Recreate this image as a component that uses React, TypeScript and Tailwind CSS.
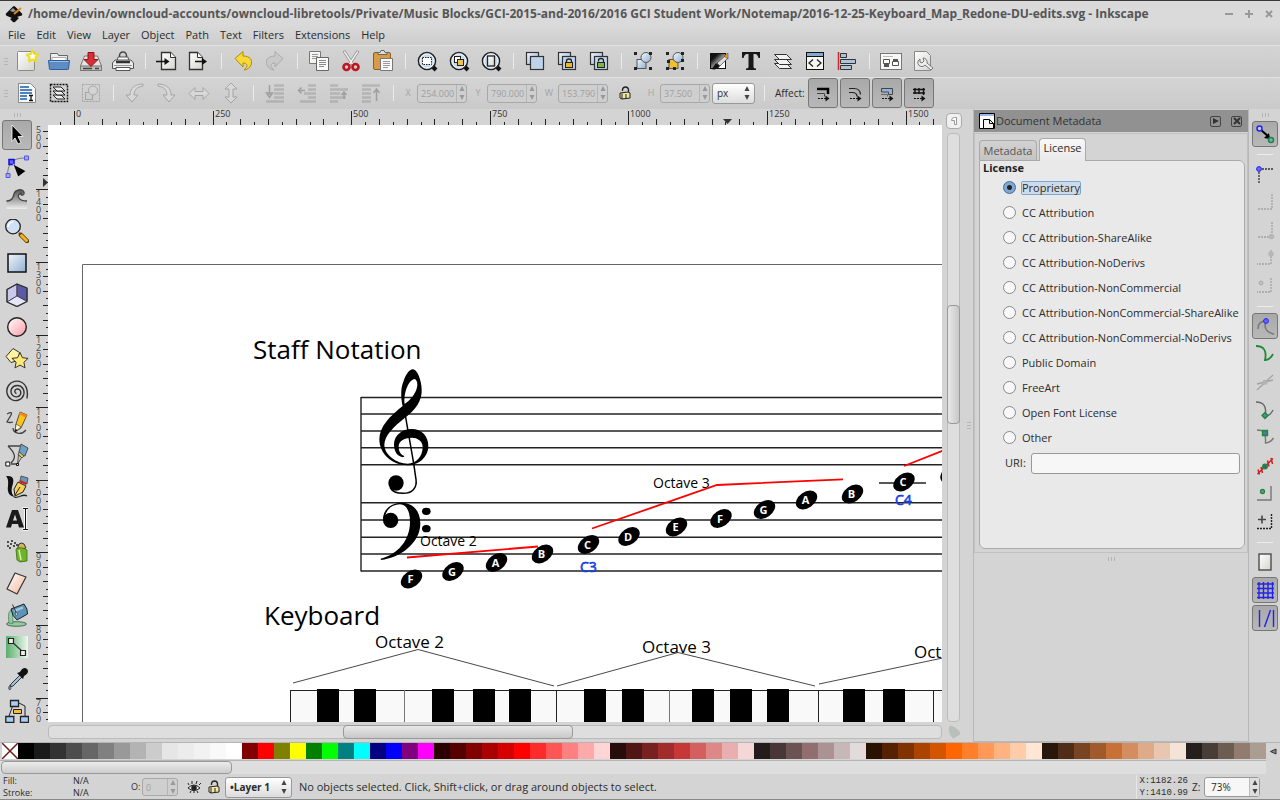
import { useState } from "react";
import type { ReactNode } from "react";

type Item = { name: string; art: ReactNode; pressed?: boolean; off?: boolean };

const star = (cx: number, cy: number, r: number, inner = 0.5, turn = -90) =>
  Array.from({ length: 10 }, (_, i) => {
    const q = i % 2 ? r * inner : r;
    const a = ((turn + i * 36) * Math.PI) / 180;
    return `${cx + q * Math.cos(a)},${cy + q * Math.sin(a)}`;
  }).join(" ");

function Ic({ children, off }: { children: ReactNode; off?: boolean }) {
  return (
    <svg viewBox="0 0 24 24" className={off ? "size-6 shrink-0 opacity-30 grayscale" : "size-6 shrink-0"} fill="none" aria-hidden="true">
      {children}
    </svg>
  );
}

function Defs() {
  return (
    <svg className="absolute size-0" aria-hidden="true">
      <defs>
        <linearGradient id="blue" x1="0" y1="0" x2="1" y2="1">
          <stop offset="0" stopColor="#f2f7fc" />
          <stop offset="1" stopColor="#8fb0d2" />
        </linearGradient>
        <linearGradient id="pink" x1="0" y1="0" x2="1" y2="1">
          <stop offset="0" stopColor="#fff" />
          <stop offset="1" stopColor="#ff9aa2" />
        </linearGradient>
        <linearGradient id="green" x1="0" y1="0" x2="1" y2="0">
          <stop offset="0" stopColor="#5aae6c" />
          <stop offset="1" stopColor="#eef8ef" />
        </linearGradient>
        <linearGradient id="paper" x1="0" y1="0" x2="1" y2="1">
          <stop offset="0" stopColor="#fff" />
          <stop offset="1" stopColor="#d4d4cf" />
        </linearGradient>
        <linearGradient id="shade" x1="0" y1="0" x2="0" y2="1">
          <stop offset="0" stopColor="#555" />
          <stop offset="1" stopColor="#eee" />
        </linearGradient>
        <linearGradient id="peach" x1="0" y1="0" x2="1" y2="1">
          <stop offset="0" stopColor="#fff" />
          <stop offset="1" stopColor="#f4b79b" />
        </linearGradient>
        <linearGradient id="ink" x1="0" y1="0" x2="1" y2="1">
          <stop offset="0.25" stopColor="#111" />
          <stop offset="0.75" stopColor="#fff" />
        </linearGradient>
      </defs>
    </svg>
  );
}

const lens = (inner: ReactNode) => (
  <>
    <path d="M17 17l4 4" stroke="#111" strokeWidth="4" />
    <circle cx="12" cy="12" r="8.5" fill="#c9dcf0" stroke="#222" strokeWidth="1.6" />
    <circle cx="12" cy="12" r="7.2" stroke="#fff" strokeOpacity=".8" />
    {inner}
  </>
);

const twoSquares = (
  <>
    <rect x="3.5" y="3.5" width="12" height="12" fill="url(#blue)" stroke="#333" strokeWidth="1.2" />
    <rect x="7.5" y="7.5" width="13" height="13" fill="#bed3ea" stroke="#333" strokeWidth="1.2" />
  </>
);

const shapesGroup = (fill: string) => (
  <>
    <rect x="6" y="10.500" width="9" height="9" fill={fill} stroke="#555" />
    <circle cx="15" cy="8.500" r="5" fill="url(#blue)" stroke="#555" />
    <path d="M3 3h3v3H3zM18 3h3v3h-3zM3 18h3v3H3zM18 18h3v3h-3z" fill="#222" />
  </>
);

const page = (
  <path d="M6.500 3.500h9l5 5v12h-14z" fill="url(#paper)" stroke="#333" strokeWidth="1.300" />
);

const fileTools: Item[][] = [
  [
    {
      name: "New",
      art: (
        <>
          <rect x="2.500" y="2.500" width="17" height="19" rx="1" fill="url(#paper)" stroke="#8a8a86" />
          <polygon points={star(17.5, 7.5, 6)} fill="#fff" stroke="#f2dc20" strokeWidth="2" strokeLinejoin="round" />
        </>
      ),
    },
    {
      name: "Open",
      art: (
        <>
          <path d="M3.500 12V4.500h7l1 2h9V12" fill="#eee" stroke="#666" />
          <path d="M5 8.500h14v4H5z" fill="#fff" stroke="#aaa" />
          <path d="M1.500 11.500h21l-1 8.500q0 .500-1 .500H3.500q-1 0-1-.500z" fill="#5e8cc6" stroke="#2f5d96" />
          <path d="M2.500 12.500h19" stroke="#9cbde2" />
        </>
      ),
    },
    {
      name: "Save",
      art: (
        <>
          <path d="M1.500 17l4-10h13l4 10v4.500h-21z" fill="#e4e4e2" stroke="#777" />
          <path d="M1.500 17h21v4.500h-21z" fill="#bdbdbb" stroke="#777" />
          <path d="M4 19.500h9M16 19.500h4" stroke="#444" strokeWidth="1.500" />
          <path d="M9 3.500h6v7h4l-7 7-7-7h4z" fill="#d4303a" stroke="#99101a" />
        </>
      ),
    },
    {
      name: "Print",
      art: (
        <>
          <circle cx="12" cy="6.500" r="3.500" stroke="#444" strokeWidth="1.500" />
          <path d="M7 8h10l1 5H6z" fill="#fff" stroke="#555" />
          <path d="M4 11h16l2.500 3v5.500h-21V14z" fill="#ececea" stroke="#555" />
          <path d="M5 13h14" stroke="#333" strokeWidth="2.500" />
          <path d="M5 18.500h14v3H5z" fill="#fff" stroke="#555" />
          <path d="M3 16.500h18" stroke="#999" />
        </>
      ),
    },
  ],
  [
    {
      name: "Import",
      art: (
        <>
          {page}
          <path d="M15.500 3.500v5h5" fill="#fff" stroke="#333" />
          <path d="M1 12.500h10" stroke="#111" strokeWidth="1.500" />
          <path d="M9.500 9l5 3.500-5 3.500z" fill="#111" />
        </>
      ),
    },
    {
      name: "Export",
      art: (
        <>
          <path d="M2.500 3.500h8l5 5v12h-13z" fill="url(#paper)" stroke="#333" strokeWidth="1.300" />
          <path d="M10.500 3.500v5h5" fill="#fff" stroke="#333" />
          <path d="M8 12.500h9" stroke="#111" strokeWidth="1.500" />
          <path d="M15 9l5 3.500-5 3.500z" fill="#111" />
        </>
      ),
    },
  ],
  [
    {
      name: "Undo",
      art: <path d="M4 9.500l8-7v4.500c7 0 10 4 8 9-1 2.500-3 4.500-7 5 4-3 4-7-1-7v4z" fill="#f6d936" stroke="#b08c0a" strokeLinejoin="round" />,
    },
    {
      name: "Redo",
      off: true,
      art: <path d="M20 9.500l-8-7v4.500c-7 0-10 4-8 9 1 2.500 3 4.500 7 5-4-3-4-7 1-7v4z" fill="#bbb" stroke="#555" strokeLinejoin="round" />,
    },
  ],
  [
    {
      name: "Copy",
      art: (
        <>
          <path d="M2.500 2.500h11v12h-11z" fill="#f4f4f2" stroke="#777" />
          <path d="M5 5.500h6M5 7.500h6M5 9.500h5" stroke="#999" />
          <path d="M9.500 8.500h12v13h-12z" fill="#fafaf8" stroke="#666" />
          <path d="M12 11.500h7M12 13.500h7M12 15.500h7M12 17.500h5" stroke="#888" />
        </>
      ),
    },
    {
      name: "Cut",
      art: (
        <>
          <path d="M5 2l9 14M19 2l-9 14" stroke="#888" strokeWidth="3" />
          <path d="M5.300 2.500l8.500 13M18.700 2.500l-8.500 13" stroke="#f0f0f0" strokeWidth="1.500" />
          <circle cx="7.500" cy="18" r="3" stroke="#c01620" strokeWidth="2.600" />
          <circle cx="16.500" cy="18" r="3" stroke="#c01620" strokeWidth="2.600" />
        </>
      ),
    },
    {
      name: "Paste",
      art: (
        <>
          <rect x="2.500" y="3.500" width="17" height="17" rx="1.500" fill="#d99a45" stroke="#8f5f1c" />
          <path d="M7 5.500V3.500h2l1-2h3l1 2h2v2z" fill="#ddd" stroke="#666" />
          <path d="M9.500 9.500h12v12h-12z" fill="#fafaf8" stroke="#777" />
          <path d="M12 12.500h7M12 14.500h7M12 16.500h7M12 18.500h5" stroke="#999" />
        </>
      ),
    },
  ],
  [
    { name: "Zoom selection", art: lens(<rect x="7.500" y="8.500" width="9" height="7" fill="#fff" stroke="#222" strokeDasharray="1.500 1" />) },
    {
      name: "Zoom drawing",
      art: lens(
        <>
          <rect x="7.500" y="7.500" width="6" height="6" fill="#fff" stroke="#222" />
          <rect x="10.500" y="10.500" width="6" height="6" fill="#f2c24e" stroke="#222" />
        </>,
      ),
    },
    { name: "Zoom page", art: lens(<rect x="8.500" y="7" width="7" height="10" fill="url(#paper)" stroke="#222" strokeWidth="1.300" />) },
  ],
  [
    { name: "Duplicate", art: twoSquares },
    {
      name: "Clone",
      art: (
        <>
          {twoSquares}
          <path d="M11.500 14v-2q0-2 2.500-2t2.500 2v2" stroke="#222" strokeWidth="1.300" />
          <rect x="10.500" y="13.500" width="7" height="5" fill="#f0b820" stroke="#222" />
        </>
      ),
    },
    {
      name: "Unlink clone",
      art: (
        <>
          {twoSquares}
          <path d="M11.500 12.500v-1q0-2 2.500-2t2.500 2v3" stroke="#222" strokeWidth="1.300" />
          <rect x="10.500" y="13.500" width="7" height="5" fill="#7cb342" stroke="#222" />
        </>
      ),
    },
  ],
  [
    { name: "Group", art: shapesGroup("url(#blue)") },
    {
      name: "Ungroup",
      art: (
        <>
          {shapesGroup("#f0c030")}
          <path d="M4 11h3v3H4zM18 10h3v3h-3zM10 18h3v3h-3z" fill="#222" />
        </>
      ),
    },
  ],
  [
    {
      name: "Fill and stroke",
      art: (
        <>
          <rect x="3.500" y="4.500" width="15" height="15" fill="url(#ink)" stroke="#111" />
          <path d="M4 20c2-1 3-4 5-6l4 3c-2 3-5 4-9 3z" fill="#111" />
          <path d="M10 14l8-7 3 2-8 8z" fill="#ddd" stroke="#333" strokeWidth=".7" />
          <path d="M17 7l4-3v6z" fill="#e8a020" stroke="#433" strokeWidth=".5" />
        </>
      ),
    },
    {
      name: "Text and font",
      art: <path d="M3 3h18v6h-1.500Q18.500 5 16 5h-1.500v13q0 1.500 2.500 1.500V21H7v-1.500q2.500 0 2.500-1.500V5H8Q5.500 5 4.500 9H3z" fill="#181818" />,
    },
    {
      name: "Layers",
      art: (
        <g fill="#f2f2f2" stroke="#333" strokeLinejoin="round">
          <path d="M3.500 14.500h12l5 5h-12z" />
          <path d="M3.500 10.500h12l5 5h-12z" />
          <path d="M3.500 5.500h12l5 5h-12z" />
        </g>
      ),
    },
    {
      name: "XML editor",
      art: (
        <>
          <rect x="3.500" y="3.500" width="17" height="17" fill="#f6f6f2" stroke="#111" />
          <path d="M4 4h16v3H4z" fill="#86a8cc" />
          <path d="M3 7.500h18" stroke="#111" />
          <path d="M10 10.500l-4 3.500 4 3.500M14 10.500l4 3.500-4 3.500" stroke="#222" strokeWidth="1.300" />
        </>
      ),
    },
    {
      name: "Align",
      art: (
        <>
          <path d="M3.500 3v18" stroke="#d22" strokeWidth="1.500" />
          <path d="M5.500 4.500h6v4h-6zM5.500 10.500h15v4h-15zM5.500 16.500h11v4h-11z" fill="#a9c2dd" stroke="#333" />
        </>
      ),
    },
  ],
  [
    {
      name: "Preferences",
      art: (
        <>
          <rect x="1.500" y="4.500" width="21" height="16" fill="#f8f8f6" stroke="#777" />
          <path d="M4 7.500h10" stroke="#bbb" />
          <path d="M4.500 10.500h6v4h-6zM13.500 12.500h6v4h-6z" fill="#fff" stroke="#555" />
          <path d="M5 15h5v3H5zM14 10h5v3h-5z" fill="#555" />
        </>
      ),
    },
    {
      name: "Document properties",
      art: (
        <>
          <path d="M3.500 2.500h12l4 4v15h-16z" fill="url(#paper)" stroke="#888" />
          <path d="M9 10a4 4 0 1 0 5 6l6 5 2-2-6-5a4 4 0 0 0-4-5l1 3-2 2-2-1z" fill="#eee" stroke="#777" />
        </>
      ),
    },
  ],
];

const bars = (d: string, arrow: ReactNode) => (
  <>
    <path d={d} stroke="#777" strokeWidth="2.500" />
    {arrow}
  </>
);

const selectTools: Item[][] = [
  [
    {
      name: "Select all",
      art: (
        <>
          <path d="M3.500 2.500h12l5 5v14h-17z" fill="#f4f6f8" stroke="#8a8a8a" />
          <path d="M5 6h9M5 9h12M5 12h12M5 15h7M5 18h7" stroke="#4f82be" strokeWidth="2" />
          <path d="M12.500 13.500h7v7h-7z" fill="#fff" />
          <path d="M14 14.500h4M14 19.500h4M16 14.500v5" stroke="#111" strokeWidth="1.300" />
        </>
      ),
    },
    {
      name: "Select all layers",
      art: (
        <>
          <rect x="3.500" y="3.500" width="17" height="17" stroke="#111" strokeWidth="1.400" strokeDasharray="2 1" />
          <g fill="#eee" stroke="#222" strokeLinejoin="round">
            <path d="M6 14h8l4 4h-8z" />
            <path d="M6 10h8l4 4h-8z" />
            <path d="M6 6h8l4 4h-8z" />
          </g>
        </>
      ),
    },
    {
      name: "Deselect",
      off: true,
      art: (
        <>
          <rect x="3.500" y="3.500" width="17" height="17" stroke="#444" strokeDasharray="2 1" />
          <rect x="6.500" y="11.500" width="7" height="7" stroke="#444" />
          <circle cx="14" cy="9.500" r="4.500" fill="#ddd" stroke="#444" />
        </>
      ),
    },
  ],
  [
    { name: "Rotate left", off: true, art: <path d="M20 3C12 3 7 7 7 14H3l6 7 6-7h-4c0-5 3-8 9-9z" fill="#eee" stroke="#444" /> },
    { name: "Rotate right", off: true, art: <path d="M3 3c8 0 13 4 13 11h4l-6 7-6-7h4c0-5-3-8-9-9z" fill="#eee" stroke="#444" /> },
    { name: "Flip horizontal", off: true, art: <path d="M2 12.500l6-6v4h8v-4l6 6-6 6v-4H8v4z" fill="#eee" stroke="#444" /> },
    { name: "Flip vertical", off: true, art: <path d="M12 2l6 6h-4v8h4l-6 6-6-6h4V8H6z" fill="#eee" stroke="#444" /> },
  ],
  [
    {
      name: "Lower to bottom",
      off: true,
      art: bars("M11 4.500h10M11 8.500h10M11 12.500h10M11 16.500h10M3 20.500h18", <path d="M6.500 4v10M3.500 12l3 4.500 3-4.500z" stroke="#333" strokeWidth="1.500" />),
    },
    { name: "Lower", off: true, art: bars("M13 4.500h8M13 8.500h8M9 12.500h12M13 16.500h8M5 20.500h16", <path d="M3 9.500h7M6.500 6.500l-3 3 3 3" stroke="#333" strokeWidth="1.500" />) },
    { name: "Raise", off: true, art: bars("M3 4.500h8M3 8.500h18M3 12.500h10M3 16.500h16M3 20.500h8", <path d="M17 18v-6M14.500 14l2.500-3 2.500 3" stroke="#333" strokeWidth="1.500" />) },
    { name: "Raise to top", off: true, art: bars("M3 4.500h18M3 8.500h9M3 12.500h9M3 16.500h9M3 20.500h9", <path d="M17.500 20V9M14.500 12l3-4 3 4" stroke="#333" strokeWidth="1.500" />) },
  ],
];

const affectArrow = (
  <>
    <path d="M7 17.500h8" stroke="#111" strokeDasharray="2 1" />
    <path d="M14.500 14.500l4 3-4 3z" fill="#111" />
  </>
);

const affectTools: Item[] = [
  {
    name: "Scale stroke width",
    art: (
      <>
        <path d="M6 8h11v5" stroke="#000" strokeWidth="2.500" />
        <path d="M6 12.500h7.500v3" stroke="#444" />
        {affectArrow}
      </>
    ),
  },
  {
    name: "Scale rounded corners",
    art: (
      <>
        <path d="M6 7.500h5q6 0 6.500 6M6 11.500h3q5 0 5 4" stroke="#222" strokeWidth="1.200" />
        {affectArrow}
      </>
    ),
  },
  {
    name: "Move gradients",
    art: (
      <>
        <path d="M6.500 7.500h11v6h-4v-2.500h-7z" fill="#8fb4dc" stroke="#444" />
        <path d="M6 13.500h6.500v2" stroke="#667" />
        {affectArrow}
      </>
    ),
  },
  {
    name: "Move patterns",
    art: (
      <>
        <path d="M6 8.500h12M6 12h12M8 7v6M12 7v6M16.500 7v7" stroke="#111" strokeWidth="1.400" />
        {affectArrow}
      </>
    ),
  },
];

const toolbox: Item[] = [
  {
    name: "Select",
    pressed: true,
    art: <path d="M7 2l11 11.500h-5l3 6-3 1.500-3-6-3 3.500z" fill="#000" stroke="#fff" strokeWidth=".8" />,
  },
  {
    name: "Edit nodes",
    art: (
      <>
        <path d="M2.500 20C3 10 6 3 20 3" stroke="#777" />
        <path d="M1 18.500h4v4H1zM19.500 1h4v4h-4z" fill="#aab" stroke="#55f" />
        <path d="M4 4.500h5v5H4z" fill="#66f" stroke="#11c" strokeWidth="1.500" />
        <path d="M8 9l13 7-8 6z" fill="#000" stroke="#fff" strokeWidth=".6" />
      </>
    ),
  },
  {
    name: "Tweak",
    art: (
      <>
        <path d="M1.500 22v-8C7 14 8 11 9 7c1-4 8-6 10-2 1 3-4 5-4 2-4 3-1 7 7 7v8z" fill="url(#shade)" />
        <path d="M1.500 14C7 14 8 11 9 7c1-4 8-6 10-2 1 4-4 4-3 1-5 2-3 8 6 8" stroke="#444" strokeWidth="1.300" />
      </>
    ),
  },
  {
    name: "Zoom",
    art: (
      <>
        <path d="M14 14l3 3" stroke="#444" strokeWidth="2" />
        <path d="M16 16l6 6" stroke="#5a3a00" strokeWidth="4.500" strokeLinecap="round" />
        <path d="M16.500 16.500l5 5" stroke="#f7b41c" strokeWidth="3" strokeLinecap="round" />
        <circle cx="8" cy="7.500" r="7.300" fill="#cfe2f4" stroke="#222" strokeWidth="1.300" />
        <path d="M3 8a5 5 0 0 1 5-5" stroke="#fff" strokeWidth="1.500" />
      </>
    ),
  },
  { name: "Rectangle", art: <rect x="3" y="3" width="18" height="18" fill="url(#blue)" stroke="#111" strokeWidth="1.500" /> },
  {
    name: "3D box",
    art: (
      <g stroke="#333" strokeWidth=".8" strokeLinejoin="round">
        <path d="M2 6.500l10-5.500v12L2 19z" fill="#c9c9ee" />
        <path d="M12 1l10 4v13.500L12 13z" fill="#5a5aa8" />
        <path d="M12 13l10 5.500L12 23.500 2 19z" fill="#e6e6fa" />
        <path d="M2 6.500l10-5.500 10 4v13.500l-10 5L2 19z" strokeWidth="1.300" />
      </g>
    ),
  },
  { name: "Ellipse", art: <circle cx="12" cy="12" r="9.300" fill="url(#pink)" stroke="#222" strokeWidth="1.400" /> },
  {
    name: "Star",
    art: (
      <>
        <path d="M8 1.500l6.500 4-1.500 8-7 2-5-6z" fill="#fff2a0" stroke="#333" />
        <polygon points={star(15, 14, 8.500, 0.48)} fill="#ffe873" stroke="#333" />
      </>
    ),
  },
  {
    name: "Spiral",
    art: (
      <path
        d="M11.500 14.500c-2-.3-2.500-3.500 0-4.300 3-1 5 2 4 5-1.200 3.300-6.500 3.600-8.500.5-2.500-4 0-9 5-9.200 5-.2 8 4.500 6.700 9.200C17 21 11 23 6.500 20.500 1.500 17.500.5 11 3.500 6.500 6.500 2 12.500 1 17 3.500c5 3 6 9.500 5 16"
        stroke="#333"
        strokeWidth="1.400"
      />
    ),
  },
  {
    name: "Pencil",
    art: (
      <>
        <path d="M2 3q6-3 4 1L2 11q3 1 6 0M8 17c0 5 8 8 13 2" stroke="#444" strokeWidth="1.300" />
        <path d="M15 1l7 3-6 13-6 4 1-8z" fill="#f7c31c" stroke="#333" strokeWidth=".8" />
        <path d="M15 1l7 3-1 3-7-4z" fill="#f08a1c" />
        <path d="M11 13l5 3-6 5z" fill="#fff6d8" stroke="#333" strokeWidth=".6" />
        <path d="M10 21l.5-3 2 1z" fill="#000" />
      </>
    ),
  },
  {
    name: "Bezier",
    art: (
      <>
        <path d="M3 3h12M3 3c8 8 8 12 3 17M6 21h8" stroke="#444" strokeWidth="1.300" />
        <path d="M16 1l7 4-3 8-5-1-1-3z" fill="#6e9fc4" stroke="#333" strokeWidth=".8" />
        <path d="M14 9l5 4-2 2-4-3z" fill="#f2c24e" stroke="#333" strokeWidth=".7" />
        <path d="M13.500 12l3 2.500-4 6.500z" fill="#ccc" stroke="#333" strokeWidth=".8" />
        <path d="M.8 19h4v4h-4zM11.500 20.500h2v2h-2z" fill="#fff" stroke="#111" />
      </>
    ),
  },
  {
    name: "Calligraphy",
    art: (
      <>
        <path d="M1 1c9-1 8 5 6 11-1 5 0 8 3 10-6-1-8-5-7-11 .5-5 0-8-2-10z" fill="#111" />
        <path d="M9 22c5 2 8-4 13-1" stroke="#222" strokeWidth="1.300" />
        <path d="M16 1l7 2-1 6-7-3z" fill="#6e94bc" stroke="#333" strokeWidth=".7" />
        <path d="M15 5l7 3-1 2-7-3z" fill="#c22" />
        <path d="M13 7l8 4-3 6-8 4-1-7z" fill="#f7cf5a" stroke="#222" />
        <path d="M10 20l5-8" stroke="#222" />
      </>
    ),
  },
  {
    name: "Text",
    art: (
      <>
        <path d="M1 20.500L7 3h6l6 17.500h-5l-1-3.500H7l-1 3.500zM8 13.500h4L10 7.500z" fill="#1a1a1a" fillRule="evenodd" />
        <path d="M17.500 1.500h5.500M17.500 22.500h5.500M20.500 2v20" stroke="#fff" strokeWidth="2.500" />
        <path d="M18 1.500h5M18 22.500h5M20.500 2v20" stroke="#111" />
      </>
    ),
  },
  {
    name: "Spray",
    art: (
      <>
        <path d="M2 3h2M5 5h2M2 7h2M6 2h2M9 4h2M4 9h2M8 7h2M11 6h2" stroke="#222" strokeWidth="1.700" />
        <path d="M12 11l2-6q3-2 5 0l2 4z" fill="#d9b35a" stroke="#333" />
        <path d="M11 10q5-3 11 1v11l-7 1-3-2z" fill="#6fb52c" stroke="#3a6a10" strokeWidth=".8" />
        <path d="M14 11l2 10" stroke="#d6f0a0" strokeWidth="1.500" />
      </>
    ),
  },
  { name: "Eraser", art: <path d="M10 2l11 4-9 17-10-5z" fill="url(#peach)" stroke="#333" strokeWidth="1.200" strokeLinejoin="round" /> },
  {
    name: "Paint bucket",
    art: (
      <>
        <ellipse cx="11.500" cy="21" rx="10" ry="2.300" fill="#8ccf9c" stroke="#333" strokeWidth=".7" />
        <path d="M6.500 7c-4 1-3 8-2.500 13l4 .500c0-4-1-8 .5-12z" fill="#8ccf9c" stroke="#465" strokeWidth=".6" />
        <path d="M6 6l13-5q4 5 3.500 10L12 17q-5-4-6-11z" fill="#5c93b8" stroke="#222" />
        <path d="M9 8l9-3.500" stroke="#a8cbe2" strokeWidth="2" />
        <path d="M7.500 1.500l4 9" stroke="#333" />
        <circle cx="11.500" cy="11" r="1.200" fill="#eee" stroke="#333" strokeWidth=".6" />
      </>
    ),
  },
  {
    name: "Gradient",
    art: (
      <>
        <path d="M1 1h22v22H1z" fill="url(#green)" />
        <path d="M6 6l12 11" stroke="#333" strokeWidth="1.200" />
        <path d="M3.500 3.500h5v5h-5zM15.500 15.500h5v5h-5z" fill="#eee" stroke="#222" strokeWidth="1.200" />
      </>
    ),
  },
  {
    name: "Dropper",
    art: (
      <>
        <path d="M15 8L6 17l-1 3 3-1 9-9z" fill="#9cc0e0" stroke="#333" />
        <path d="M12 6l3-1c2-4 5-5 7-3s1 5-3 7l-1 3z" fill="#111" />
        <path d="M5 18q-3 4 0 5 2-1 0-5z" fill="#5f94c8" stroke="#333" strokeWidth=".6" />
      </>
    ),
  },
  {
    name: "Connector",
    art: (
      <>
        <path d="M8 6L4 17M14 4l6 3v11" stroke="#222" />
        <path d="M5.500 1.500h8v6h-8zM.8 17.500h8v6h-8zM15.500 17.500h8v6h-8z" fill="#a9cdf5" stroke="#222" strokeWidth="1.300" />
        <path d="M8.500 10.500h8v4h-8z" fill="#fbc02d" stroke="#222" />
      </>
    ),
  },
];

const curve = "M3 4c8 0 11 5 9 14 4 0 6-2 8-6";

const snapTools: Item[][] = [
  [
    {
      name: "Enable snapping",
      pressed: true,
      art: (
        <>
          <path d="M8 8l8 7" stroke="#000" strokeWidth="2" />
          <path d="M17 17l-6-1 5-5z" fill="#000" />
          <circle cx="6.500" cy="6.500" r="2.500" fill="#ccd" stroke="#22f" strokeWidth="1.500" />
          <circle cx="18" cy="18" r="2.500" fill="#8a9" stroke="#185" strokeWidth="1.500" />
        </>
      ),
    },
  ],
  [
    {
      name: "Snap bounding boxes",
      art: (
        <>
          <path d="M6 7h14M6 7v14" stroke="#333" strokeWidth="1.300" strokeDasharray="2 1" />
          <circle cx="6" cy="7" r="2.400" fill="#66f" stroke="#22f" />
        </>
      ),
    },
    { name: "Snap to edges", off: true, art: <path d="M19 4v15H4" stroke="#333" strokeWidth="1.300" strokeDasharray="2 1" /> },
    {
      name: "Snap to corners",
      off: true,
      art: (
        <>
          <path d="M19 4v15H4" stroke="#333" strokeWidth="1.300" strokeDasharray="2 1" />
          <circle cx="18.500" cy="18.500" r="2.800" fill="#777" />
        </>
      ),
    },
    {
      name: "Snap to edge midpoints",
      off: true,
      art: (
        <>
          <path d="M18 4v14H4" stroke="#333" strokeWidth="1.300" strokeDasharray="2 1" />
          <circle cx="18" cy="8" r="2.800" fill="#777" />
        </>
      ),
    },
    {
      name: "Snap to box centers",
      off: true,
      art: (
        <>
          <path d="M18 4v14H4" stroke="#333" strokeWidth="1.300" strokeDasharray="2 1" />
          <circle cx="8" cy="9" r="2" fill="#999" stroke="#444" />
        </>
      ),
    },
  ],
  [
    {
      name: "Snap nodes",
      pressed: true,
      art: (
        <>
          <path d="M5 15C5 9 8 7 13 7c-3 8 2 12 8 13" stroke="#777" strokeWidth="1.500" />
          <circle cx="13" cy="7" r="2.400" fill="#66f" stroke="#22f" />
        </>
      ),
    },
    { name: "Snap to paths", art: <path d={curve} stroke="#1c8c34" strokeWidth="1.800" /> },
    {
      name: "Snap to intersections",
      off: true,
      art: (
        <>
          <path d="M4 20L20 5M4 14l16-4" stroke="#333" strokeWidth="1.300" />
          <circle cx="12" cy="12.300" r="2.500" fill="#666" />
        </>
      ),
    },
    {
      name: "Snap to cusp nodes",
      art: (
        <>
          <path d={curve} stroke="#666" strokeWidth="1.400" />
          <path d="M9 17.500l3-3 3 3-3 3z" fill="#58a" stroke="#1c8c34" strokeWidth="1.300" />
        </>
      ),
    },
    {
      name: "Snap to smooth nodes",
      art: (
        <>
          <path d="M4 4c6 0 9 1 8.500 13 4 0 6-2 8-5" stroke="#777" strokeWidth="1.400" />
          <path d="M9.500 4.500h5v5h-5z" fill="#579" stroke="#1c8c34" strokeWidth="1.300" />
        </>
      ),
    },
    {
      name: "Snap to line midpoints",
      art: (
        <>
          <path d="M4.500 20L20 4.500M5 15.500l1.500 5M8 13l1.500 6M14.500 6.500l1.500 6M18 4l1.500 6" stroke="#c22" strokeWidth="1.500" />
          <circle cx="12" cy="12.500" r="2.300" fill="#368" stroke="#1c8c34" strokeWidth="1.300" />
        </>
      ),
    },
    {
      name: "Snap to object centers",
      art: (
        <>
          <path d="M18 4v14H4" stroke="#777" strokeWidth="1.400" />
          <circle cx="9.500" cy="9.500" r="2" fill="#88a" stroke="#1c8c34" strokeWidth="1.300" />
        </>
      ),
    },
    {
      name: "Snap to rotation centers",
      art: (
        <>
          <path d="M18.500 4v14.500H4" stroke="#222" strokeWidth="1.400" strokeDasharray="2 1" />
          <path d="M9 5.500v8M5 9.500h8" stroke="#444" strokeWidth="1.600" />
        </>
      ),
    },
  ],
  [
    { name: "Snap to page border", art: <rect x="6" y="4" width="12" height="16" fill="url(#paper)" stroke="#555" strokeWidth="1.500" /> },
    { name: "Snap to grid", pressed: true, art: <path d="M6 4v17M10.500 4v17M15 4v17M19.500 4v17M4 6h17M4 10.500h17M4 15h17M4 19.500h17" stroke="#22e" strokeWidth="1.400" /> },
    { name: "Snap to guides", pressed: true, art: <path d="M6.500 4v17M20.500 4v17M11.500 21L17.500 4" stroke="#22e" strokeWidth="1.400" /> },
  ],
];

const palette = (
  "#000000 #1a1a1a #333333 #4d4d4d #666666 #808080 #999999 #b3b3b3 #cccccc #e6e6e6 #ececec #f2f2f2 #f9f9f9 #ffffff " +
  "#800000 #ff0000 #808000 #ffff00 #008000 #00ff00 #008080 #00ffff #000080 #0000ff #800080 #ff00ff " +
  "#2b0000 #550000 #800000 #aa0000 #d40000 #ff0000 #ff2a2a #ff5555 #ff8080 #ffaaaa #ffd5d5 " +
  "#280b0b #501616 #782121 #a02c2c #c83737 #d35f5f #de8787 #e9afaf #f4d7d7 " +
  "#241c1c #483737 #6c5353 #916f6f #ac9393 #c8b7b7 #e3dbdb " +
  "#2b1100 #552200 #803300 #aa4400 #d45500 #ff6600 #ff7f2a #ff9955 #ffb380 #ffccaa #ffe6d5 " +
  "#28170b #502d16 #784421 #a05a2c #c87137 #d38d5f #deaa87 #e9c6af #f4e3d7 " +
  "#241f1c #483e37 #6c5d53 #917c6f #ac9d93"
).split(" ");

const pressedLook = "rounded-[3px] border border-[#777] bg-gradient-to-b from-[#a9a9a9] to-[#b8b8b8]";

function ToolButton({ item }: { item: Item }) {
  return (
    <button type="button" aria-label={item.name} disabled={item.off} className="flex h-[30px] w-8 shrink-0 items-center justify-center">
      <Ic off={item.off}>{item.art}</Ic>
    </button>
  );
}

function Groups({ groups }: { groups: Item[][] }) {
  return (
    <>
      {groups.map((g, i) => (
        <div key={g[0].name} className="flex shrink-0 items-center">
          {i > 0 && <Divider />}
          {g.map((t) => (
            <ToolButton key={t.name} item={t} />
          ))}
        </div>
      ))}
    </>
  );
}

function Divider() {
  return (
    <div className="flex w-3 shrink-0 justify-center">
      <div className="h-4 w-px bg-[#ececec]" />
    </div>
  );
}

function Grip({ across }: { across?: boolean }) {
  return (
    <div className={across ? "flex h-[11px] shrink-0 items-center justify-center gap-0.5" : "flex w-[11px] shrink-0 flex-col items-center justify-center gap-0.5"}>
      {[0, 1, 2].map((n) => (
        <div key={n} className={across ? "h-1 w-px bg-[#b5b5b5]" : "h-px w-1 bg-[#b5b5b5]"} />
      ))}
    </div>
  );
}

function Arrows({ dark }: { dark?: boolean }) {
  return (
    <svg viewBox="0 0 8 16" className="h-4 w-2" fill={dark ? "#444" : "#999"} aria-hidden="true">
      <path d="M4 1l2.500 5h-5zM4 15l2.500-5h-5z" />
    </svg>
  );
}

function Spin({ label, value, id }: { label: string; value: string; id: string }) {
  return (
    <div className="flex shrink-0 items-center">
      <label htmlFor={id} className="w-[18px] text-center text-[9px] text-[#a5a5a5]">
        {label}
      </label>
      <div className="flex h-[19px] w-[50px] items-center rounded-[3px] border border-[#a8a8a8] bg-[#cfcfcf]">
        <input id={id} disabled defaultValue={value} className="h-full w-[38px] bg-transparent pl-[3px] text-[9px] text-[#a0a0a0]" />
        <span className="flex h-full flex-1 items-center justify-center border-l border-[#b5b5b5]">
          <Arrows />
        </span>
      </div>
    </div>
  );
}

function Lock() {
  return (
    <svg viewBox="0 0 16 16" className="size-4 shrink-0" fill="none" aria-hidden="true">
      <path d="M5.500 6V4.500Q6 2 8.500 2t3 2.500V8" stroke="#222" strokeWidth="1.300" />
      <path d="M3 8l8-1 2 1v5l-8 1-2-1z" fill="#f0e8a0" stroke="#222" />
      <path d="M5 8.500V14M8 10h2M8 12h2" stroke="#222" />
    </svg>
  );
}

function TopRuler() {
  const ticks = Array.from({ length: 64 }, (_, i) => i - 1);
  return (
    <svg className="h-4 min-w-0 flex-1 overflow-visible" aria-hidden="true">
      <g transform="translate(-48 -109)" shapeRendering="crispEdges">
        {ticks.map((i) => {
          const x = 74 + i * 13.86;
          const y = i % 10 === 0 ? 111 : i % 2 === 0 ? 119 : 122;
          return x < 941 ? <path key={i} d={`M${Math.round(x) + 0.5} ${y}V125`} stroke="#222" /> : null;
        })}
      </g>
      <g transform="translate(-48 -109)" fill="#333" fontSize="9">
        {[0, 250, 500, 750, 1000, 1250, 1500].map((n, i) => (
          <text key={n} x={Math.round(76 + i * 138.6)} y="117">
            {n}
          </text>
        ))}
      </g>
      <path d="M675 10h9l-4.500 5z" fill="#333" />
    </svg>
  );
}

function SideRuler() {
  const top = 116.7;
  const ticks = Array.from({ length: 90 }, (_, i) => i + 1);
  return (
    <svg className="h-full w-3 shrink-0" aria-hidden="true">
      <g transform="translate(-36 -125)">
        {ticks.map((i) => {
          const y = Math.round(top + i * 7.26) + 0.5;
          const x = i % 10 === 0 ? 36 : i % 2 === 0 ? 43 : 46;
          return <path key={i} d={`M${x} ${y}H48`} stroke="#222" shapeRendering="crispEdges" />;
        })}
        {[1500, 1400, 1300, 1200, 1100, 1000, 900, 800, 700].map((n, i) =>
          String(n)
            .split("")
            .map((c, k) => (
              <text key={`${n}-${k}`} x="36" y={Math.round(top + i * 72.6 + 8 + k * 8)} fontSize="9" fill="#444">
                {c}
              </text>
            )),
        )}
        <path d="M43 178v9l5-4.500z" fill="#333" />
      </g>
    </svg>
  );
}

const notes: [string, number, number][] = [
  ["F", 411.5, 579],
  ["G", 453, 571.5],
  ["A", 496.5, 562.5],
  ["B", 542.5, 554],
  ["C", 588.5, 544.5],
  ["D", 629, 536.5],
  ["E", 676.5, 527],
  ["F", 721, 518.5],
  ["G", 764.5, 509.5],
  ["A", 806.5, 500],
  ["B", 852.5, 494],
  ["C", 904, 482],
  ["D", 951, 474],
];

const blackKeys = [317, 354, 432, 473, 509, 584, 622, 692, 730, 767, 843, 883];

function Clefs() {
  return (
    <g transform="translate(240 330) scale(0.33333)">
      <path
        fillRule="evenodd"
        d="M520 118C535 122 547 160 545 188C542 225 512 250 495 263C460 290 433 318 433 345C434 375 470 401 503 401C530 400 547 380 548 352C549 332 530 322 514 323C492 324 476 333 476 350C476 365 484 375 493 378C492 383 484 382 480 379C468 373 462 360 462 342C463 315 487 297 515 297C545 297 565 318 565 348C565 380 537 406 503 406C455 406 418 370 418 328C418 290 450 258 488 228C482 200 482 175 490 155C498 132 508 117 520 118ZM494 222C490 190 505 150 524 147C540 155 533 195 494 222Z"
      />
      <path d="M490 220C500 280 512 350 521 400L528 448C532 475 515 490 490 490C470 490 456 484 450 472" fill="none" stroke="#000" strokeWidth="4.500" />
      <circle cx="468" cy="459" r="23" />
      <path d="M429 572C427 540 452 519 485 518C520 518 541 545 541 580C541 640 480 684 423 690L422 686C475 672 510 630 510 575C510 545 500 524 480 523C455 523 436 540 435 566Z" />
      <circle cx="452" cy="571" r="23" />
      <ellipse cx="559" cy="544" rx="13" ry="11" />
      <ellipse cx="559" cy="596" rx="13" ry="11" />
    </g>
  );
}

function Drawing() {
  return (
    <svg className="min-w-0 flex-1 bg-white" role="img" aria-label="Staff and keyboard note map">
      <g transform="translate(-48 -125)">
        <path d="M2000 264.500H82.500V1400" fill="none" stroke="#666" />
        <g stroke="#222" strokeWidth="1.400" fill="none">
          {[397.5, 414, 431, 447.7, 464.7, 502.7, 520, 537.3, 554, 571].map((y) => (
            <path key={y} d={`M361 ${y}H2000`} />
          ))}
          <path d="M361 397V571.500M879 483H926" />
        </g>
        <Clefs />
        <text x="253" y="359" fontSize="26">
          Staff Notation
        </text>
        <text x="264" y="625" fontSize="26">
          Keyboard
        </text>
        <g fontSize="14">
          <text x="420" y="546">
            Octave 2
          </text>
          <text x="653" y="488">
            Octave 3
          </text>
        </g>
        <g fill="none" stroke="#f00" strokeWidth="1.800">
          <path d="M407 557.500L538 546.500" />
          <path d="M592 528.500L717 485L843 479.300" />
          <path d="M904 466L1000 428" />
        </g>
        {notes.map(([n, x, y]) => (
          <g key={x}>
            <ellipse cx={x} cy={y} rx="11.800" ry="8" transform={`rotate(-35 ${x} ${y})`} />
            <text x={x - 1} y={y + 4} fontSize="11" fontWeight="700" fill="#fff" textAnchor="middle">
              {n}
            </text>
          </g>
        ))}
        <g fontSize="14" fill="#1440e0" stroke="#1440e0" strokeWidth=".6">
          <text x="580" y="572">
            C3
          </text>
          <text x="895" y="505">
            C4
          </text>
        </g>
        <g fontSize="17">
          <text x="375" y="648">
            Octave 2
          </text>
          <text x="642" y="653">
            Octave 3
          </text>
          <text x="914" y="658">
            Octave 4
          </text>
        </g>
        <g fill="none" stroke="#333" strokeWidth=".9">
          <path d="M293 683L418 649.500L554 686" />
          <path d="M557 686L678 652.500L815 686" />
          <path d="M819 684L1000 646" />
        </g>
        <rect x="290.500" y="690.500" width="1500" height="200" fill="#f9f9f9" stroke="#222" />
        <g shapeRendering="crispEdges">
          <path d="M556.500 690V900M818.500 690V900M933.500 690V900" stroke="#222" />
          <path d="M404.500 690V900M669.500 690V900" stroke="#777" />
          {blackKeys.map((x) => (
            <rect key={x} x={x} y="689" width="22" height="200" />
          ))}
        </g>
      </g>
    </svg>
  );
}

const licenses = [
  "Proprietary",
  "CC Attribution",
  "CC Attribution-ShareAlike",
  "CC Attribution-NoDerivs",
  "CC Attribution-NonCommercial",
  "CC Attribution-NonCommercial-ShareAlike",
  "CC Attribution-NonCommercial-NoDerivs",
  "Public Domain",
  "FreeArt",
  "Open Font License",
  "Other",
];

function MetadataDock() {
  const [license, setLicense] = useState("Proprietary");
  return (
    <aside className="mr-px flex w-[276px] shrink-0 flex-col border-x border-b border-[#b8b8b8] pt-px">
      <header className="flex h-[22px] shrink-0 items-center bg-[#919191] pr-1.5 pl-[5px] text-[#333]">
        <svg viewBox="0 0 16 16" className="size-4" aria-hidden="true">
          <path d="M.5.500h15v15H.5z" fill="#fff" stroke="#000" />
          <path d="M1 1h14v2H1z" fill="#9ab5e8" />
          <path d="M4.500 6.500h6l4 4v5h-10z" fill="#f4f4f0" stroke="#000" />
          <path d="M10.500 6.500v4h4" fill="none" stroke="#000" />
        </svg>
        <h2 className="flex-1 pl-px text-[11px]">Document Metadata</h2>
        <button type="button" aria-label="Iconify" className="mr-[10px] flex size-[11px] items-center justify-center rounded-xs border border-[#444]">
          <svg viewBox="0 0 6 6" className="size-1.5" fill="#333" aria-hidden="true">
            <path d="M0 0l6 3-6 3z" />
          </svg>
        </button>
        <button type="button" aria-label="Close" className="flex size-[11px] items-center justify-center rounded-xs border border-[#444]">
          <svg viewBox="0 0 8 8" className="size-2" stroke="#333" strokeWidth="2" aria-hidden="true">
            <path d="M1 1l6 6M7 1l-6 6" />
          </svg>
        </button>
      </header>
      <div className="mt-px border border-[#c0c0c0] px-1 pb-[3px]">
        <div role="tablist" className="flex h-[26px] items-end gap-0.5">
          <button type="button" role="tab" aria-selected="false" className="h-[20px] w-[58px] rounded-t border border-b-0 border-[#aaa] bg-gradient-to-b from-[#d2d2d2] to-[#c4c4c4] text-[11px] leading-4 text-[#555]">
            Metadata
          </button>
          <button type="button" role="tab" aria-selected="true" className="relative z-10 -mb-px h-[23px] w-[47px] rounded-t border border-b-0 border-[#aaa] bg-gradient-to-b from-[#f8f8f8] to-[#e9e9e9] pb-1 text-[11px] leading-4">
            License
          </button>
        </div>
        <fieldset className="h-[389px] rounded-md rounded-tl-none border border-[#aaa] bg-[#e9e9e9] pr-1 pl-[3px]">
          <legend className="float-left h-[14px] w-full text-[11px] leading-[14px] font-bold text-[#222]">License</legend>
          <div className="clear-both">
            {licenses.map((l) => (
              <label key={l} className="flex h-[25px] items-center gap-[5px] pl-5 text-[11px] leading-3 whitespace-nowrap">
                <input
                  type="radio"
                  name="license"
                  checked={license === l}
                  onChange={() => setLicense(l)}
                  className="size-[13px] shrink-0 appearance-none rounded-full border border-[#888] bg-[#f8f8f8] checked:border-[#41688f] checked:bg-[radial-gradient(circle,#222_0_2px,#7fa8d4_3px)]"
                />
                <span className={license === l ? "rounded-xs border border-[#7aa7da] bg-[#cfdbe8] leading-3" : "border border-transparent leading-3"}>{l}</span>
              </label>
            ))}
            <div className="flex h-[27px] items-center">
              <label htmlFor="uri" className="w-12 pl-[22px] text-[11px]">
                URI:
              </label>
              <input id="uri" className="h-[21px] min-w-0 flex-1 rounded-[3px] border border-[#999] bg-[#f7f7f7] px-1 text-[11px]" />
            </div>
          </div>
        </fieldset>
      </div>
      <Grip across />
    </aside>
  );
}

export default function App() {
  return (
    <div className="flex h-screen flex-col overflow-hidden border-t border-[#3a3a3a] bg-[#d4d4d4] font-['Open_Sans','Noto_Sans',sans-serif] text-[#2c2c2c]">
      <Defs />
      <header className="flex h-[25px] shrink-0 items-center bg-[#dadada] pr-[6px] pl-[5px]">
        <svg viewBox="0 0 18 18" className="size-[18px] shrink-0" aria-hidden="true">
          <path d="M8 1.500Q9 .5 10 1.500l7 7q1 2-2 2.500l-3 1 2 1-4 4q-1 .5-2 0l-3-3 2-1-5-2Q0 10 1 8.500z" fill="#111" />
          <path d="M5 6l3-3 3 3-3 1z" fill="#999" />
          <path d="M9 9l7-6" stroke="#e08a20" strokeWidth="2" />
        </svg>
        <h1 className="min-w-0 flex-1 truncate pl-[5px] text-[12px] font-bold text-[#555]">
          /home/devin/owncloud-accounts/owncloud-libretools/Private/Music Blocks/GCI-2015-and-2016/2016 GCI Student Work/Notemap/2016-12-25-Keyboard_Map_Redone-DU-edits.svg - Inkscape
        </h1>
        <div className="flex gap-[10px]">
          {[
            ["Minimize", "M1 5h8"],
            ["Maximize", "M1 5h8M5 1v8"],
            ["Close window", "M2 2l6 6M8 2L2 8"],
          ].map(([name, d]) => (
            <button key={name} type="button" aria-label={name}>
              <svg viewBox="0 0 10 10" className="size-[10px]" stroke="#999" strokeWidth="2" aria-hidden="true">
                <path d={d} />
              </svg>
            </button>
          ))}
        </div>
      </header>
      <nav className="flex h-[19px] shrink-0 items-center gap-[11px] bg-gradient-to-b from-[#d9d9d9] to-[#cdcdcd] pl-2 text-[11px]">
        {["File", "Edit", "View", "Layer", "Object", "Path", "Text", "Filters", "Extensions", "Help"].map((m) => (
          <button key={m} type="button">
            {m}
          </button>
        ))}
      </nav>
      <div className="flex h-8 shrink-0 border-t border-[#e2e2e2] bg-gradient-to-b from-[#d4d4d4] to-[#cacaca] pb-px">
        <Grip />
        <Groups groups={fileTools} />
      </div>
      <div className="flex h-8 shrink-0 items-center border-t border-[#e2e2e2] bg-gradient-to-b from-[#d4d4d4] to-[#cacaca] pb-px">
        <Grip />
        <Groups groups={selectTools} />
        <Divider />
        <div className="flex items-center">
          <Spin id="pos-x" label="X" value="254.000" />
          <div className="w-0.5" />
          <Spin id="pos-y" label="Y" value="790.000" />
          <div className="w-[3px]" />
          <Spin id="size-w" label="W" value="153.790" />
          <button type="button" aria-label="Lock proportions" className="mx-[9px]">
            <Lock />
          </button>
          <Spin id="size-h" label="H" value="37.500" />
        </div>
        <div className="relative ml-0.5 flex h-[21px] w-[43px] shrink-0 items-center">
          <select aria-label="Unit" className="h-full w-full appearance-none rounded-[3px] border border-[#999] bg-gradient-to-b from-white to-[#dcdcdc] pl-1 text-[10px]">
            <option>px</option>
          </select>
          <span className="pointer-events-none absolute right-1">
            <Arrows dark />
          </span>
        </div>
        <div className="w-[3px]" />
        <Divider />
        <span className="w-[38px] shrink-0 pl-[5px] text-[10px]">Affect:</span>
        <div className="flex gap-0.5">
          {affectTools.map((t) => (
            <button key={t.name} type="button" aria-label={t.name} aria-pressed="true" className={`flex h-[30px] w-[30px] items-center justify-center ${pressedLook}`}>
              <Ic>{t.art}</Ic>
            </button>
          ))}
        </div>
      </div>

      <main className="flex min-h-0 flex-1">
        <div className="flex w-9 shrink-0 flex-col items-start overflow-hidden">
          <div className="w-[34px]">
            <Grip across />
          </div>
          {toolbox.map((t) => (
            <button
              key={t.name}
              type="button"
              aria-label={t.name}
              aria-pressed={!!t.pressed}
              className={`mb-0.5 ml-0.5 flex h-[30px] w-[30px] shrink-0 items-center justify-center ${t.pressed ? pressedLook : ""}`}
            >
              <Ic>{t.art}</Ic>
            </button>
          ))}
        </div>
        <section className="flex min-w-0 flex-1 flex-col">
          <div className="flex min-h-0 flex-1">
            <div className="flex min-w-0 flex-1 flex-col">
              <div className="flex h-4 shrink-0 pl-3">
                <TopRuler />
              </div>
              <div className="flex min-h-0 flex-1">
                <SideRuler />
                <Drawing />
              </div>
            </div>
            <div className="flex w-[23px] shrink-0 flex-col items-start pl-1">
              <button type="button" aria-label="Zoom with window" className="mt-1 flex h-4 w-4 items-center justify-center rounded border border-[#aaa] bg-[#f0f0f0]">
                <svg viewBox="0 0 8 8" className="size-2" fill="#fff" stroke="#999" aria-hidden="true">
                  <path d="M1.500 3.500q0-3 3-3h2v7h-2v-4z" />
                </svg>
              </button>
              <div className="mt-1 ml-px flex w-[13px] flex-1 flex-col rounded-sm border border-[#bbb] bg-[#dedede]">
                <div className="basis-[171px]" />
                <div className="-mx-px h-[119px] rounded-sm border border-[#999] bg-gradient-to-r from-[#e8e8e8] to-[#c8c8c8]" />
              </div>
            </div>
          </div>
          <div className="flex h-5 shrink-0 items-start pt-[3px] pl-3">
            <div className="flex h-[14px] min-w-0 flex-1 rounded-sm border border-[#bbb] bg-[#dedede]">
              <div className="w-[294px]" />
              <div className="-my-px w-[230px] rounded-sm border border-[#999] bg-gradient-to-b from-[#e8e8e8] to-[#c8c8c8]" />
            </div>
            <svg viewBox="0 0 14 14" className="mr-[3px] ml-1.5 size-[14px]" aria-hidden="true">
              <path d="M2 1q8 2 10 8L5 13Q0 7 2 1z" fill="#b9c0b9" stroke="#bbb" />
            </svg>
          </div>
        </section>
        <div className="flex w-2 shrink-0 items-center justify-center">
          <Grip />
        </div>
        <MetadataDock />
        <div className="flex w-[30px] shrink-0 flex-col items-center">
          <Grip across />
          {snapTools.map((g, i) => (
            <div key={g[0].name} className="flex flex-col items-center">
              {i > 0 && (
                <div className="flex h-3 items-center">
                  <div className="h-px w-4 bg-[#ececec]" />
                </div>
              )}
              {g.map((t) => (
                <button
                  key={t.name}
                  type="button"
                  aria-label={t.name}
                  disabled={t.off}
                  className={`my-px flex h-[26px] w-[26px] items-center justify-center ${t.pressed ? pressedLook : ""}`}
                >
                  <Ic off={t.off}>{t.art}</Ic>
                </button>
              ))}
            </div>
          ))}
        </div>
      </main>

      <div className="flex h-[18px] shrink-0 border-t border-[#b5b5b5] pl-0.5">
        <div className="flex h-4 min-w-0 flex-1 overflow-hidden">
          <button type="button" aria-label="No colour" className="h-4 w-4 shrink-0 bg-white">
            <svg viewBox="0 0 16 16" className="size-4" stroke="#701c1c" strokeWidth="1.500" aria-hidden="true">
              <path d="M0 0l16 16M16 0L0 16" />
            </svg>
          </button>
          {palette.map((c, i) => (
            <button key={i} type="button" aria-label={c} className="h-4 w-4 shrink-0" style={{ backgroundColor: c }} />
          ))}
        </div>
        <button type="button" aria-label="Palette menu" className="flex w-[14px] items-center justify-center">
          <svg viewBox="0 0 8 8" className="size-2" fill="#888" stroke="#333" aria-hidden="true">
            <path d="M7 1v5L1.500 3.500z" />
          </svg>
        </button>
      </div>
      <div className="mr-[14px] flex h-[14px] shrink-0 border-t border-[#b5b5b5] bg-[#dedede] pl-px">
        <div className="w-[231px] rounded-sm border border-[#999] bg-gradient-to-b from-[#ececec] to-[#cccccc]" />
      </div>
      <footer className="flex h-[26px] shrink-0 items-center border-b border-[#888] pt-px text-[9px]">
        <dl className="grid w-[128px] shrink-0 grid-cols-[70px_1fr] pl-[3px] leading-3">
          <dt>Fill:</dt>
          <dd>N/A</dd>
          <dt>Stroke:</dt>
          <dd>N/A</dd>
        </dl>
        <label htmlFor="opacity" className="w-[14px] shrink-0 pl-[3px]">
          O:
        </label>
        <div className="flex h-[18px] w-[36px] shrink-0 items-center rounded-[3px] border border-[#a8a8a8] bg-[#cfcfcf]">
          <input id="opacity" disabled defaultValue="0" className="h-full w-6 bg-transparent pl-[3px] text-[#a0a0a0]" />
          <span className="flex h-full flex-1 items-center justify-center border-l border-[#b5b5b5]">
            <Arrows />
          </span>
        </div>
        <button type="button" aria-label="Layer visibility" className="ml-2">
          <svg viewBox="0 0 16 16" className="size-4" fill="none" aria-hidden="true">
            <path d="M2 9q6-6 12 0-6 5-12 0z" fill="#eee" stroke="#222" />
            <circle cx="8" cy="9" r="2.800" fill="#222" />
            <path d="M3 6L2 4M6 5V2M10 5l1-3M13 6l2-2M5 12l-1 2M11 12l1 2M8 12v2" stroke="#222" />
          </svg>
        </button>
        <button type="button" aria-label="Layer lock" className="ml-1">
          <Lock />
        </button>
        <div className="relative ml-[3px] flex h-[21px] w-[67px] shrink-0 items-center">
          <select aria-label="Layer" className="h-full w-full appearance-none rounded-[3px] border border-[#999] bg-gradient-to-b from-white to-[#dcdcdc] pl-1 text-[10px] font-bold">
            <option>•Layer 1</option>
          </select>
          <span className="pointer-events-none absolute right-1">
            <Arrows dark />
          </span>
        </div>
        <p className="min-w-0 flex-1 truncate pl-[7px] text-[11px]">No objects selected. Click, Shift+click, or drag around objects to select.</p>
        <dl className="shrink-0 border-l border-[#e6e6e6] pl-0.5 font-['Liberation_Mono',monospace] text-[9px] leading-3">
          <div className="flex">
            <dt>X:</dt>
            <dd>1182.26</dd>
          </div>
          <div className="flex">
            <dt>Y:</dt>
            <dd>1410.99</dd>
          </div>
        </dl>
        <label htmlFor="zoom" className="w-4 shrink-0 pl-1 text-[10px]">
          Z:
        </label>
        <div className="mr-[20px] flex h-5 w-[56px] shrink-0 items-center rounded-[3px] border border-[#999] bg-[#f7f7f7]">
          <input id="zoom" defaultValue="73%" className="h-full w-[44px] bg-transparent pl-1.5 text-[10px]" />
          <span className="flex h-full flex-1 items-center justify-center border-l border-[#bbb] bg-[#dedede]">
            <Arrows dark />
          </span>
        </div>
      </footer>
    </div>
  );
}
